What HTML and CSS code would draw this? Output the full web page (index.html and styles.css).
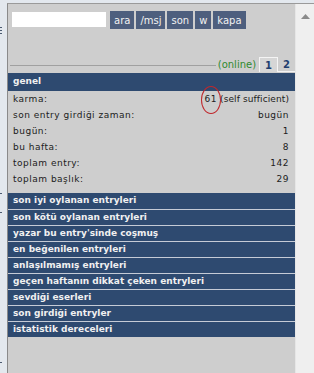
FILE: index.html
```html
<!DOCTYPE html>
<html lang="tr">
<head>
  <meta charset="UTF-8" />
  <title>sözlük</title>
  <link rel="stylesheet" href="styles.css">
</head>
<body>
  <div class="side">
    <span class="mark m1"></span>
    <span class="mark m2"></span>
    <span class="mark m3"></span>
    <span class="mark m4"></span>
    <span class="mark m5"></span>
    <span class="mark m6"></span>
  </div>
  <div class="frame">
    <div class="content">
      <div class="search">
        <input type="text" class="query">
        <button class="btn">ara</button>
        <button class="btn">/msj</button>
        <button class="btn">son</button>
        <button class="btn">w</button>
        <button class="btn">kapa</button>
      </div>

      <div class="tabs">
        <div class="rule"></div>
        <span class="online">(online)</span>
        <span class="tab active">1</span>
        <span class="tab">2</span>
      </div>

      <div class="head">genel</div>
      <div class="row"><span>karma:</span><span class="karma"><span class="circled">61</span><span class="level">(self sufficient)</span></span></div>
      <div class="row"><span>son entry girdiği zaman:</span><span>bugün</span></div>
      <div class="row"><span>bugün:</span><span>1</span></div>
      <div class="row"><span>bu hafta:</span><span>8</span></div>
      <div class="row"><span>toplam entry:</span><span>142</span></div>
      <div class="row"><span>toplam başlık:</span><span>29</span></div>

      <ul class="links">
        <li>son iyi oylanan entryleri</li>
        <li>son kötü oylanan entryleri</li>
        <li>yazar bu entry'sinde coşmuş</li>
        <li>en beğenilen entryleri</li>
        <li>anlaşılmamış entryleri</li>
        <li>geçen haftanın dikkat çeken entryleri</li>
        <li>sevdiği eserleri</li>
        <li>son girdiği entryler</li>
        <li>istatistik dereceleri</li>
      </ul>
    </div>
    <div class="scrollbar">
      <svg class="arrow" width="9" height="5" viewBox="0 0 9 5"><path d="M4.5 0 L9 5 L0 5 Z" fill="#8a8a8a"/></svg>
    </div>
  </div>
</body>
</html>
```

FILE: styles.css
```css
html, body {
  margin: 0;
  height: 100%;
}
body {
  display: flex;
  background: #e3e8ee;
  font-family: "DejaVu Sans", Verdana, sans-serif;
  font-size: 9px;
  color: #1c1c1c;
  overflow: hidden;
}
.side {
  width: 7px;
  position: relative;
}
.mark {
  position: absolute;
  left: 0;
  width: 2px;
  height: 1px;
  background: #4a5a70;
}
.m1 { top: 27px; }
.m2 { top: 30px; }
.m3 { top: 33px; }
.m4 { top: 193px; }
.m5 { top: 212px; }
.m6 { top: 362px; }
.frame {
  flex: 1;
  display: flex;
  margin-top: 3px;
  border-top: 1px solid #9a9a9a;
  border-left: 1px solid #8a8a8a;
  background: #cecece;
}
.content {
  width: 287px;
}
.scrollbar {
  flex: 1;
  background: #efefef;
  border-left: 1px solid #e6e6e6;
  display: flex;
  justify-content: center;
  padding-top: 10px;
  align-items: flex-start;
}
.search {
  display: flex;
  align-items: flex-start;
  padding: 7px 0 0 4px;
  height: 38px;
}
.query {
  width: 94px;
  height: 15px;
  box-sizing: border-box;
  border: none;
  background: #fff;
  margin: 1px 4px 0 0;
  padding: 0;
}
.btn {
  height: 18px;
  margin-right: 2px;
  padding: 0 4px;
  border: none;
  background: #4e5f7e;
  color: #f2f2f2;
  font-family: "DejaVu Sans", Verdana, sans-serif;
  font-size: 10px;
}
.tabs {
  display: flex;
  align-items: flex-end;
  padding-left: 2px;
  height: 23px;
}
.rule {
  flex: 1;
  border-bottom: 1px solid #a0a0a0;
  margin-bottom: 6px;
}
.online {
  color: #2f8a2f;
  font-size: 10px;
  margin: 0 3px 0 2px;
  padding-bottom: 2px;
}
.tab {
  font-weight: bold;
  color: #1f3f6f;
  font-size: 10px;
  padding: 2px 5px 1px;
  border-bottom: 1px solid #f4f4f4;
}
.tab.active {
  border: 1px solid #f4f4f4;
  border-bottom: none;
  background: #d6d6d6;
}
.head, .links li {
  background: #2e4a70;
  color: #f0f0f0;
  font-weight: bold;
  font-size: 9px;
  height: 16px;
  line-height: 16px;
  padding-left: 5px;
}
.head {
  margin-top: 1px;
  height: 18px;
  line-height: 17px;
}
.row {
  display: flex;
  justify-content: space-between;
  height: 16px;
  line-height: 16px;
  padding: 0 6px 0 5px;
  letter-spacing: 0.5px;
}
.karma {
  display: flex;
}
.circled {
  position: relative;
}
.circled::after {
  content: "";
  position: absolute;
  left: -4px;
  top: -5px;
  width: 18px;
  height: 26px;
  border: 1px solid #c0282c;
  border-radius: 50%;
}
.level {
  margin-left: 3px;
  letter-spacing: 0.1px;
}
.links {
  list-style: none;
  margin: 6px 0 0;
  padding: 0;
}
.links li {
  border-top: 1px solid #c5cbd6;
  height: 15px;
  line-height: 15px;
}
.links li:first-child {
  border-top: none;
  height: 16px;
}
```
